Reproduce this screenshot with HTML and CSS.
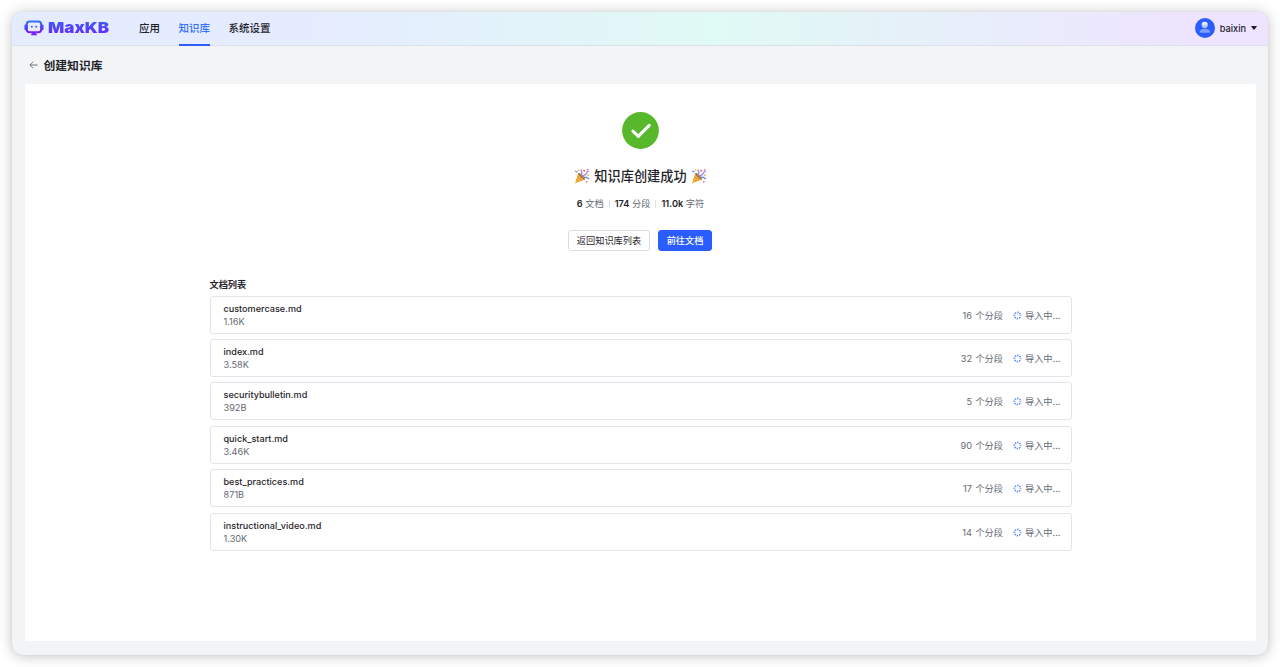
FILE: index.html
```html
<!DOCTYPE html>
<html lang="zh-CN">
<head>
<meta charset="utf-8">
<title>MaxKB</title>
<link rel="stylesheet" href="styles.css">
</head>
<body>
<svg class="defs" width="0" height="0" aria-hidden="true">
  <defs>
    <linearGradient id="brand" x1="0" y1="0" x2="0" y2="1">
      <stop offset="0" stop-color="#3370ff"/><stop offset=".55" stop-color="#5a32f5"/><stop offset="1" stop-color="#7f1dfa"/>
    </linearGradient>
    <linearGradient id="head" x1="0" y1="0" x2="0" y2="1">
      <stop offset="0" stop-color="#fff"/><stop offset="1" stop-color="#9db4ff"/>
    </linearGradient>
    <symbol id="party" viewBox="0 0 16 16">
      <path d="M4.2 4.8 11 11.6 1 15.4Z" fill="#f6b13c"/>
      <path d="M3.4 8.2 7.8 12.6M2.5 11 5 13.6" stroke="#d98a35" stroke-width=".9"/>
      <ellipse cx="7.6" cy="8.3" rx="1.4" ry="4.5" transform="rotate(-45 7.6 8.3)" fill="#b5703c"/>
      <path d="M6.8 7.6C8.6 5.6 8 3.6 6.9 1.6M8.2 8.6C9.8 6.6 11.4 7.4 12.2 5.4S13.4 3.2 14.8 3.2" stroke="#9a86e4" stroke-width="1.3" fill="none"/>
      <path d="M9.3 9.8C11.2 8.6 13.2 9.4 15 11" stroke="#6d8fe4" stroke-width="1.3" fill="none"/>
      <path d="M9.6 1.6l1.8.5-.5 1.6-1.8-.5z" fill="#ef6a6a"/>
      <path d="M13 .8l1.6.4-.4 1.6-1.6-.5z" fill="#ea7fa6"/>
      <path d="M1.4 2.4l2.4 1.4-.6 1-2.4-1.4z" fill="#5b8fe0"/>
      <path d="M13.4 6.4l1.6.3-.4 1.6-1.6-.4z" fill="#f4b942"/>
      <path d="M12.2 13l1.5.3-.4 1.5-1.5-.4z" fill="#e86aa0"/>
      <path d="M4.4 1l1.3.8-.8 1.4-1.3-.8z" fill="#f4b942"/>
    </symbol>
    <symbol id="loading" viewBox="0 0 9 9">
      <circle cx="4.5" cy="4.5" r="3.1" fill="none" stroke="#5e88ff" stroke-width="1.6" stroke-dasharray="1.4 1.035" stroke-dashoffset=".7"/>
    </symbol>
  </defs>
</svg>
<div class="window">
  <header class="topbar">
    <div class="logo">
      <svg class="logo-mark" viewBox="0 0 20 16">
        <rect x=".4" y="4.6" width="3" height="5.6" rx="1.2" fill="#4657fa"/>
        <rect x="16.6" y="4.6" width="3" height="5.6" rx="1.2" fill="#4657fa"/>
        <rect x="2.8" y="1.5" width="14.4" height="10.8" rx="2.8" fill="none" stroke="url(#brand)" stroke-width="2"/>
        <circle cx="7.8" cy="6.7" r=".95" fill="#4b50f8"/><circle cx="12.2" cy="6.7" r=".95" fill="#4b50f8"/>
        <path d="M8.5 12.6h3l.4 1.5h1v1.2H7.1v-1.2h1z" fill="#701ff8"/>
      </svg>
      <span class="logo-text">MaxKB</span>
    </div>
    <nav class="nav">
      <a class="nav-item">应用</a>
      <a class="nav-item active">知识库</a>
      <a class="nav-item">系统设置</a>
    </nav>
    <div class="user">
      <svg class="avatar" viewBox="0 0 20 20">
        <circle cx="10" cy="10" r="10" fill="#2b5cff"/>
        <circle cx="9.7" cy="6.9" r="3.1" fill="url(#head)"/>
        <path d="M4.6 14.7c0-3 2-4 5.2-4s5.3 1 5.3 4z" fill="#7f9dff"/>
      </svg>
      <span class="user-name">baixin</span>
      <svg class="caret" viewBox="0 0 6 4"><path d="M.5 0h5q.7.1.3.6L3.5 3.5q-.5.5-1 0L.2.6Q-.2.1.5 0z" fill="#1f2329"/></svg>
    </div>
  </header>
  <div class="page-head">
    <svg class="back" viewBox="0 0 9 8"><path d="M4.1.8.9 4l3.2 3.2M1 4h7.6" fill="none" stroke="#646a73" stroke-width=".9"/></svg>
    <h1 class="page-title">创建知识库</h1>
  </div>
  <main class="panel">
    <svg class="success" viewBox="0 0 37 37">
      <circle cx="18.5" cy="18.5" r="18.4" fill="#57b82b"/>
      <path d="M10.9 19.2 16.3 24.4 27.2 13.4" fill="none" stroke="#fff" stroke-width="3.1" stroke-linecap="round" stroke-linejoin="round"/>
    </svg>
    <h2 class="result-title"><svg class="party"><use href="#party"/></svg><span>知识库创建成功</span><svg class="party"><use href="#party"/></svg></h2>
    <div class="stats">
      <span class="stat"><b>6</b> 文档</span>
      <span class="stat"><b>174</b> 分段</span>
      <span class="stat"><b>11.0k</b> 字符</span>
    </div>
    <div class="actions">
      <button class="btn">返回知识库列表</button>
      <button class="btn primary">前往文档</button>
    </div>
    <section class="docs">
      <h3 class="docs-title">文档列表</h3>
      <div class="doc-list">
        <div class="doc"><div class="info"><div class="name">customercase.md</div><div class="size">1.16K</div></div><span class="count">16 个分段</span><svg class="spin"><use href="#loading"/></svg><span class="state">导入中...</span></div>
        <div class="doc"><div class="info"><div class="name">index.md</div><div class="size">3.58K</div></div><span class="count">32 个分段</span><svg class="spin"><use href="#loading"/></svg><span class="state">导入中...</span></div>
        <div class="doc"><div class="info"><div class="name">securitybulletin.md</div><div class="size">392B</div></div><span class="count">5 个分段</span><svg class="spin"><use href="#loading"/></svg><span class="state">导入中...</span></div>
        <div class="doc"><div class="info"><div class="name">quick_start.md</div><div class="size">3.46K</div></div><span class="count">90 个分段</span><svg class="spin"><use href="#loading"/></svg><span class="state">导入中...</span></div>
        <div class="doc"><div class="info"><div class="name">best_practices.md</div><div class="size">871B</div></div><span class="count">17 个分段</span><svg class="spin"><use href="#loading"/></svg><span class="state">导入中...</span></div>
        <div class="doc"><div class="info"><div class="name">instructional_video.md</div><div class="size">1.30K</div></div><span class="count">14 个分段</span><svg class="spin"><use href="#loading"/></svg><span class="state">导入中...</span></div>
      </div>
    </section>
  </main>
</div>
</body>
</html>
```
FILE: styles.css
```css
* { box-sizing: border-box; }
body {
  margin: 0;
  height: 667px;
  padding: 12px;
  overflow: hidden;
  background: #fff;
  font-family: Inter, "Noto Sans CJK SC", sans-serif;
  font-size: 9.2px;
  color: #1f2329;
}
h1, h2, h3 { margin: 0; font-weight: 500; }
svg { display: block; flex: none; }
.defs { position: absolute; }
.window {
  width: 1256px;
  height: 643px;
  border-radius: 10px;
  background: #f2f4f6;
  overflow: hidden;
  box-shadow: 0 0 1px rgba(0,0,0,.2), 0 1px 14px rgba(0,0,0,.24);
}
.topbar {
  height: 34px;
  display: flex;
  align-items: center;
  padding: 0 11px 1px 12px;
  border-bottom: 1px solid #dcdfec;
  background: linear-gradient(90deg, #e5ecff 24%, #e0faf5 56%, #eee4ff 94%);
}
.logo { display: flex; align-items: center; gap: 4px; width: 115px; }
.logo-mark { width: 20px; height: 16px; }
.logo-text {
  font-size: 15.2px;
  line-height: 18px;
  font-weight: 900;
  transform: scaleX(1.12);
  transform-origin: left;
  background: linear-gradient(#3b60ff, #6c20f8);
  -webkit-background-clip: text;
  background-clip: text;
  color: transparent;
}
.nav { display: flex; gap: 18.5px; height: 34px; margin-bottom: -1px; }
.nav-item {
  height: 34px;
  line-height: 34px;
  font-size: 10.5px;
  font-weight: 500;
  border-bottom: 2px solid transparent;
}
.nav-item.active { color: #3370ff; border-bottom-color: #2b5cff; }
.user { margin-left: auto; display: flex; align-items: center; }
.avatar { width: 20px; height: 20px; }
.user-name { margin-left: 5px; font-size: 9.2px; font-weight: 500; }
.caret { width: 6px; height: 4px; margin-left: 5px; }
.page-head { height: 38px; display: flex; align-items: center; padding-left: 17px; }
.back { width: 9px; height: 8px; }
.page-title { margin: 1px 0 0 5.5px; font-size: 11.8px; line-height: 18px; font-weight: 700; }
.panel {
  margin: 0 12px 0 13px;
  height: 557px;
  padding-top: 28px;
  border-radius: 2px;
  background: #fff;
  display: flex;
  flex-direction: column;
  align-items: center;
}
.success { width: 37px; height: 37px; }
.result-title {
  margin-top: 18px;
  display: flex;
  align-items: center;
  gap: 4px;
  font-size: 13.2px;
  line-height: 18px;
}
.party { width: 16px; height: 16px; }
.stats { display: flex; margin-top: 12px; line-height: 14px; color: #646a73; }
.stat + .stat { margin-left: 5px; padding-left: 6px; position: relative; }
.stat + .stat::before {
  content: "";
  position: absolute;
  left: 0;
  top: 3px;
  height: 8px;
  border-left: 1px solid #dee0e3;
}
.stat b { font-weight: 600; color: #1f2329; }
.actions { display: flex; gap: 8px; margin: 19px 1px 0 0; }
.btn {
  width: 82px;
  height: 21px;
  padding: 0;
  border: 1px solid #d9dce1;
  border-radius: 3px;
  background: #fff;
  color: #1f2329;
  font: 400 9.2px/19px Inter, "Noto Sans CJK SC", sans-serif;
}
.btn.primary { width: 54px; border-color: #2b5cff; background: #2b5cff; color: #fff; font-weight: 500; }
.docs { width: 862px; margin-top: 26px; }
.docs-title { font-size: 9.2px; line-height: 16px; font-weight: 700; }
.doc-list { display: flex; flex-direction: column; gap: 5.4px; margin-top: 2.6px; }
.doc {
  height: 38px;
  display: flex;
  align-items: center;
  padding: 0 10px 0 13px;
  border: 1px solid #e3e5ea;
  border-radius: 3px;
}
.info { flex: 1; line-height: 13px; }
.name { font-weight: 500; font-size: 9.1px; }
.size, .count, .state { color: #646a73; }
.count { word-spacing: .8px; }
.spin { width: 9px; height: 9px; margin: 1px 3px 0 10px; }
```
